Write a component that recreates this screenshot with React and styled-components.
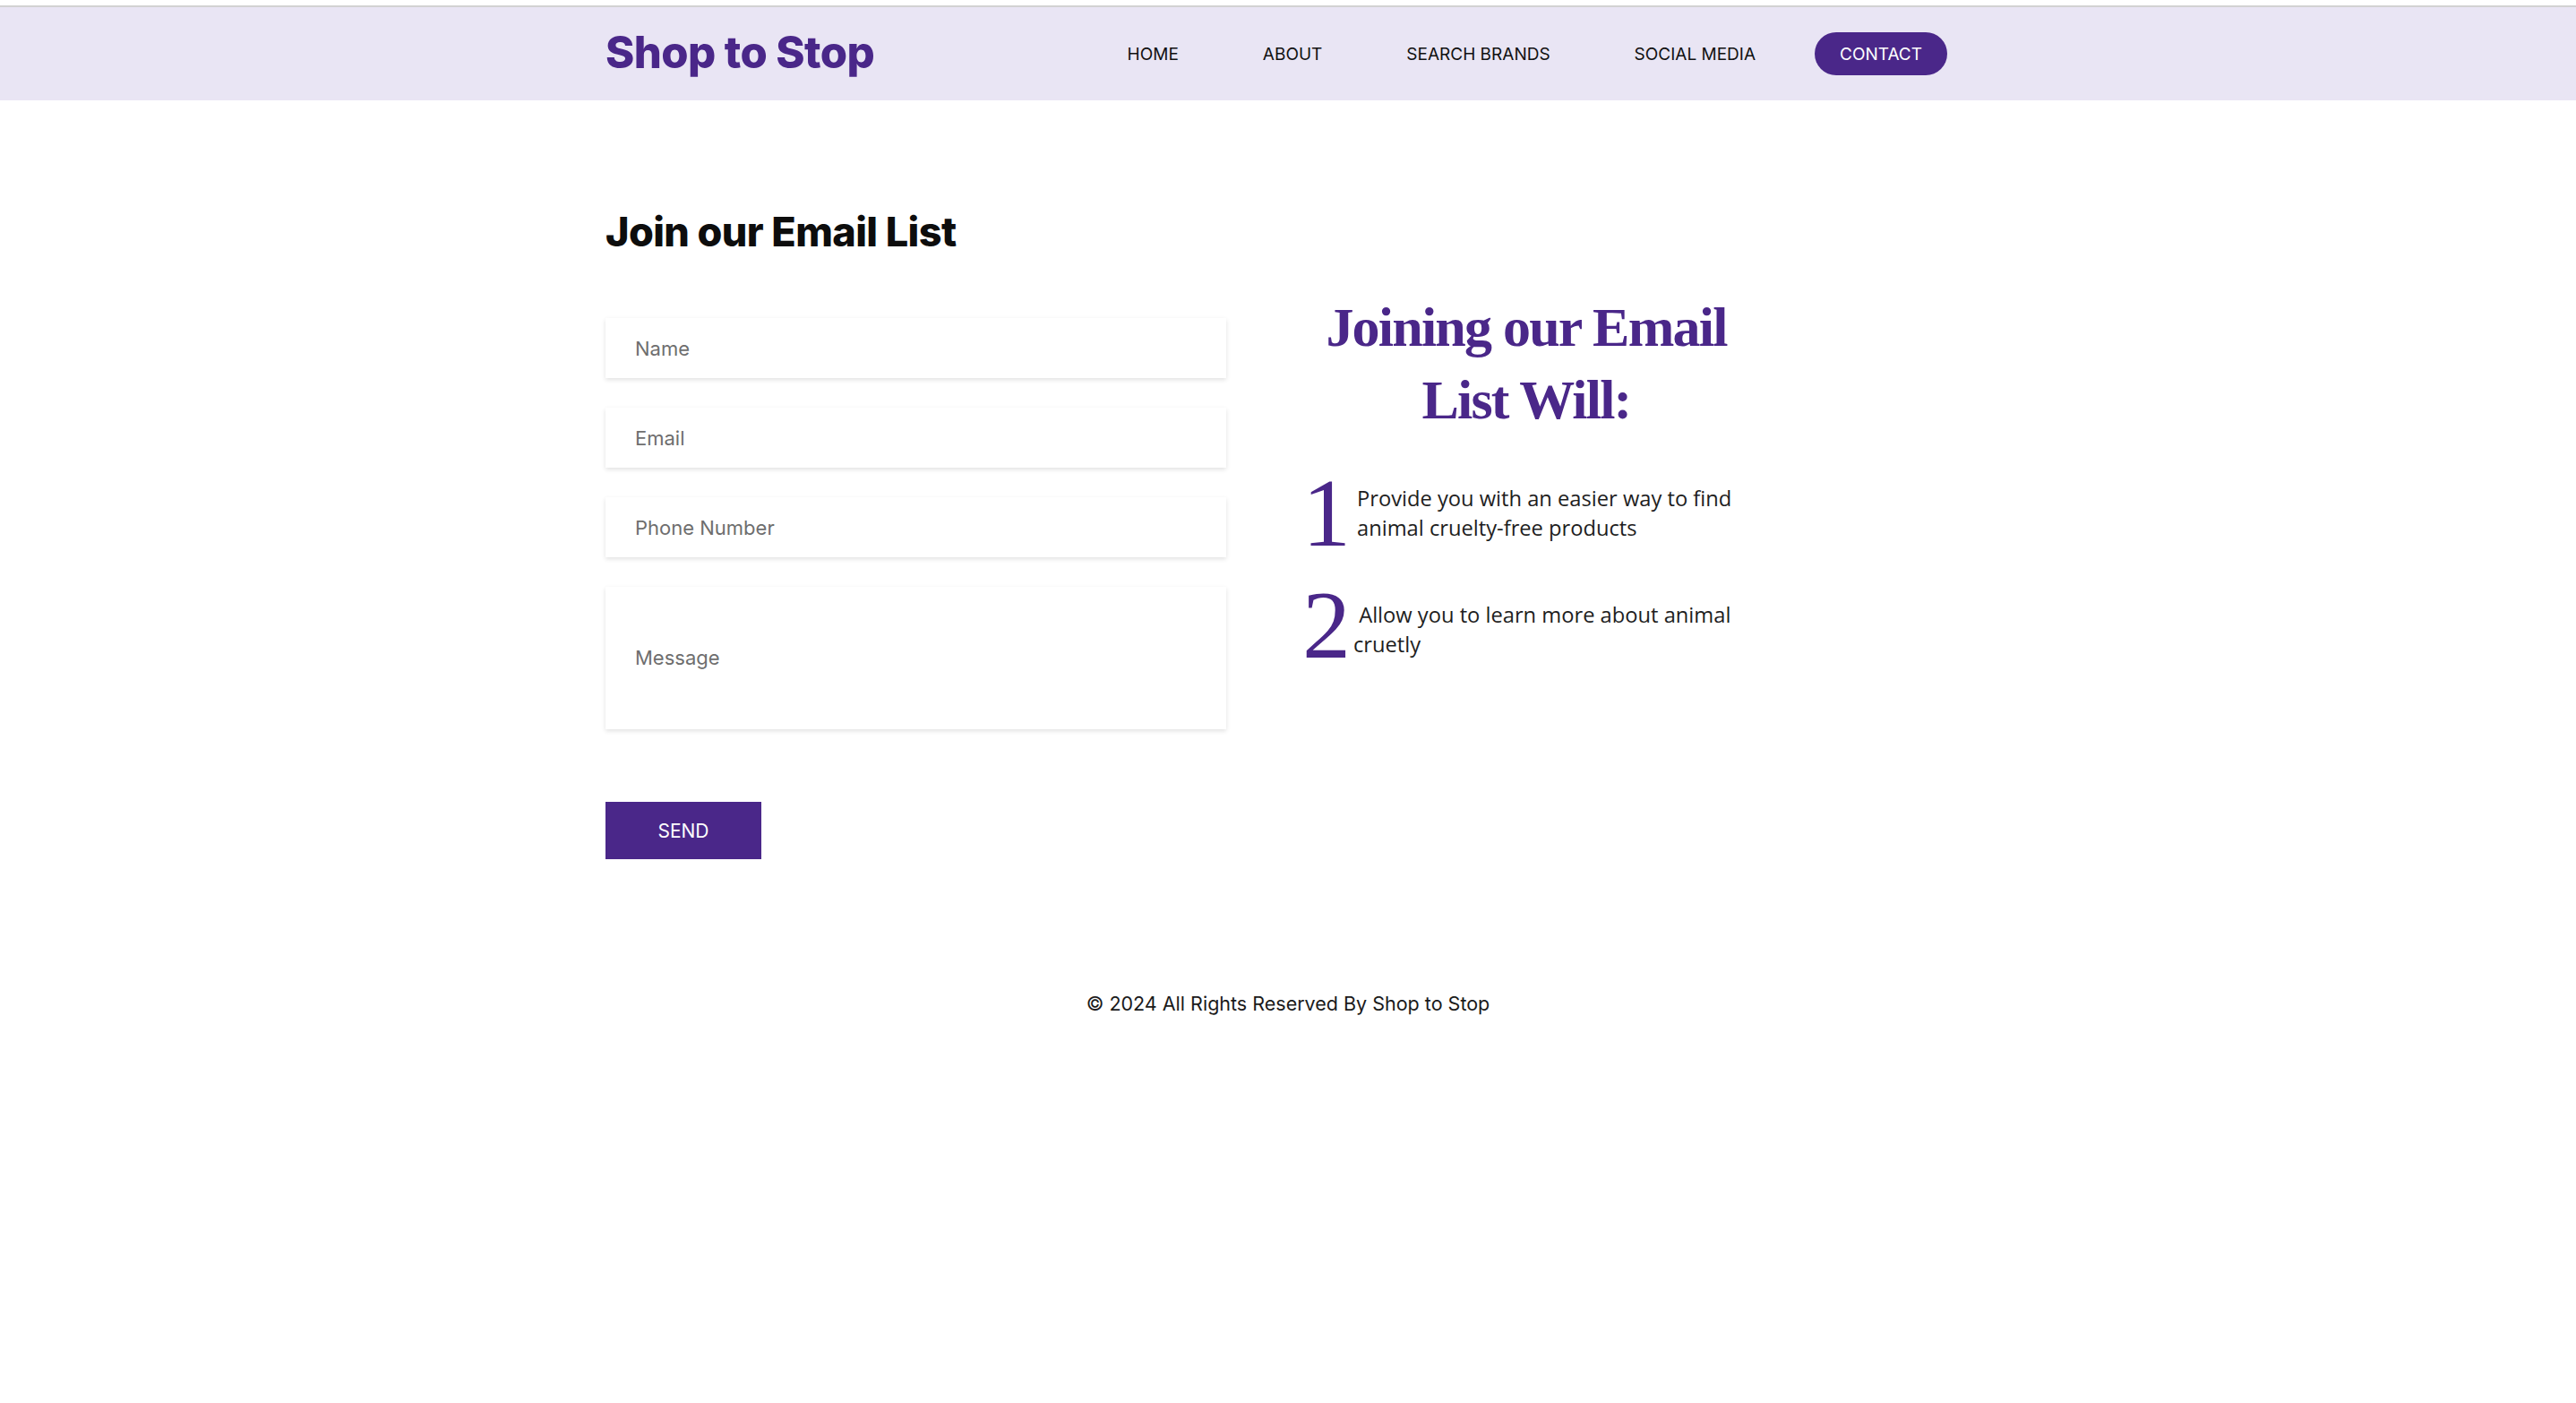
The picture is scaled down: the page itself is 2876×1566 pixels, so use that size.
import styled, { createGlobalStyle } from 'styled-components';

const GlobalStyle = createGlobalStyle`
  html, body {
    margin: 0;
    padding: 0;
    background: #ffffff;
  }
  body {
    font-family: Inter, 'Noto Sans', sans-serif;
    color: #111111;
  }
  * {
    box-sizing: border-box;
  }
`;

const purple = '#4a2789';

const TopStrip = styled.div`
  height: 8px;
  background: #ffffff;
  border-bottom: 2px solid #d2d2d2;
`;

const Header = styled.header`
  background: #e9e5f4;
  height: 104px;
`;

const Container = styled.div`
  width: 1524px;
  margin: 0 auto;
`;

const HeaderInner = styled(Container)`
  height: 100%;
  display: flex;
  align-items: center;
  justify-content: space-between;
`;

const Logo = styled.div`
  font-size: 49px;
  font-weight: 800;
  color: ${purple};
  letter-spacing: -0.6px;
  margin-top: -4px;
`;

const Nav = styled.nav`
  display: flex;
  align-items: center;
  gap: 38px;
  margin-right: 26px;
`;

const NavItem = styled.a`
  font-size: 19px;
  text-transform: uppercase;
  color: ${(p) => (p.$active ? '#ffffff' : '#111111')};
  background: ${(p) => (p.$active ? purple : 'transparent')};
  border-radius: 30px;
  height: 48px;
  padding: 0 28px;
  display: flex;
  align-items: center;
  text-decoration: none;
  cursor: pointer;
`;

const Main = styled(Container)`
  display: flex;
  gap: 85px;
  padding-top: 120px;
`;

const LeftCol = styled.div`
  width: 693px;
`;

const Title = styled.h1`
  margin: 0 0 69px;
  font-size: 45px;
  font-weight: 800;
  line-height: 1.2;
  letter-spacing: -0.6px;
  color: #0d0d0d;
`;

const Form = styled.form`
  display: flex;
  flex-direction: column;
  gap: 33px;
`;

const Field = styled.input`
  width: 100%;
  height: 67px;
  border: none;
  outline: none;
  background: #ffffff;
  box-shadow: 0 2px 5px rgba(0, 0, 0, 0.12);
  padding: 0 33px;
  font-family: Inter, 'Noto Sans', sans-serif;
  font-size: 22px;
  color: #333;

  &::placeholder {
    color: #6e6e6e;
  }
`;

const MessageField = styled.textarea`
  width: 100%;
  height: 159px;
  border: none;
  outline: none;
  resize: none;
  background: #ffffff;
  box-shadow: 0 2px 5px rgba(0, 0, 0, 0.12);
  padding: 66px 33px 0;
  font-family: Inter, 'Noto Sans', sans-serif;
  font-size: 22px;
  color: #333;

  &::placeholder {
    color: #6e6e6e;
  }
`;

const SendButton = styled.button`
  margin-top: 81px;
  width: 174px;
  height: 64px;
  border: none;
  background: ${purple};
  color: #ffffff;
  font-family: Inter, 'Noto Sans', sans-serif;
  font-size: 21px;
  text-transform: uppercase;
  cursor: pointer;
`;

const RightCol = styled.div`
  width: 500px;
  padding-top: 93px;
`;

const PerksTitle = styled.h2`
  margin: 0;
  text-align: center;
  font-family: 'Liberation Serif', 'DejaVu Serif', serif;
  font-weight: 700;
  font-size: 62px;
  line-height: 81px;
  letter-spacing: -1.8px;
  color: ${purple};
`;

const PerkList = styled.div`
  margin-top: 32px;
  display: flex;
  flex-direction: column;
  gap: 17px;
`;

const Perk = styled.div`
  display: flex;
  align-items: center;
  gap: ${(p) => p.$gap}px;
`;

const PerkNumber = styled.span`
  font-family: 'Liberation Serif', 'DejaVu Serif', serif;
  font-size: 108px;
  line-height: 1;
  color: ${purple};
  width: ${(p) => p.$width}px;
  text-align: center;
`;

const PerkText = styled.p`
  margin: 0;
  padding-top: ${(p) => p.$shift}px;
  font-family: 'Open Sans', 'Noto Sans', sans-serif;
  font-size: 23.7px;
  line-height: 33px;
  color: #1e1e1e;
  white-space: pre-wrap;
`;

const Footer = styled.footer`
  margin-top: 148px;
  text-align: center;
  font-size: 21.5px;
  color: #1a1a1a;
`;

const perks = [
  { n: '1', w: 44, gap: 17, shift: 0, text: 'Provide you with an easier way to find\nanimal cruelty-free products' },
  { n: '2', w: 54, gap: 3, shift: 10, text: ' Allow you to learn more about animal\ncruetly' }
];

export default function App() {
  return (
    <>
      <GlobalStyle />
      <TopStrip />
      <Header>
        <HeaderInner>
          <Logo>Shop to Stop</Logo>
          <Nav>
            <NavItem>Home</NavItem>
            <NavItem>About</NavItem>
            <NavItem>Search Brands</NavItem>
            <NavItem>Social Media</NavItem>
            <NavItem $active>Contact</NavItem>
          </Nav>
        </HeaderInner>
      </Header>

      <Main>
        <LeftCol>
          <Title>Join our Email List</Title>
          <Form onSubmit={(e) => e.preventDefault()}>
            <Field placeholder="Name" />
            <Field placeholder="Email" />
            <Field placeholder="Phone Number" />
            <MessageField placeholder="Message" />
          </Form>
          <SendButton>Send</SendButton>
        </LeftCol>

        <RightCol>
          <PerksTitle>
            Joining our Email
            <br />
            List Will:
          </PerksTitle>
          <PerkList>
            {perks.map((p) => (
              <Perk key={p.n} $gap={p.gap}>
                <PerkNumber $width={p.w}>{p.n}</PerkNumber>
                <PerkText $shift={p.shift}>{p.text}</PerkText>
              </Perk>
            ))}
          </PerkList>
        </RightCol>
      </Main>

      <Footer>© 2024 All Rights Reserved By Shop to Stop</Footer>
    </>
  );
}
